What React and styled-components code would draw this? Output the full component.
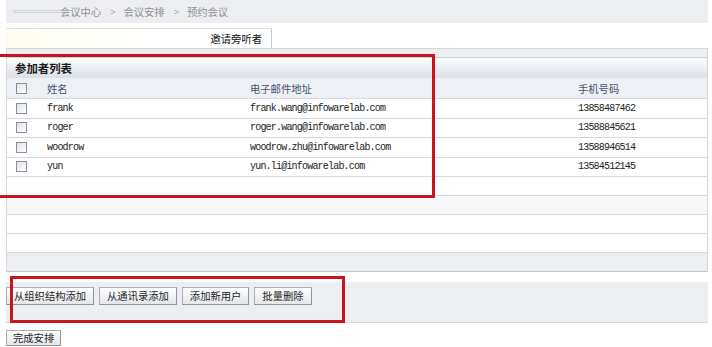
import React from 'react';
import styled, { createGlobalStyle } from 'styled-components';

const Global = createGlobalStyle`
  html, body { margin: 0; padding: 0; background: #fff; }
  body { font-family: "Noto Sans CJK SC", "Noto Sans", sans-serif; overflow: hidden; }
`;

const Page = styled.div`
  position: relative;
  width: 702px;
  height: 347px;
  margin-left: 6px;
`;

const Breadcrumb = styled.div`
  height: 23px;
  background: #edeef1;
  display: flex;
  align-items: center;
  padding-left: 7px;
  font-size: 10.3px;
  color: #8e9196;
`;

const Faded = styled.span`
  display: inline-block;
  width: 47px;
  height: 1px;
  border-top: 1px solid #d0d1d4;
  border-bottom: 1px solid #d0d1d4;
`;

const Sep = styled.span`
  font-family: "Liberation Sans", sans-serif;
  font-size: 9px;
  color: #a5a8ad;
  margin: 0 8px 0 9px;
`;

const TabStrip = styled.div`
  margin-top: 5px;
  height: 20px;
  border-bottom: 1px solid #d3d7dc;
  display: flex;
`;

const Tab = styled.div`
  width: 266px;
  height: 20px;
  border-top: 1px solid #dfe1e4;
  border-right: 1px solid #c6c9ce;
  box-sizing: border-box;
  background: linear-gradient(to right, #fffdf1, #ffffff 60%);
  display: flex;
  align-items: center;
  justify-content: flex-end;
  padding-right: 9px;
  font-size: 10.3px;
  color: #111;
`;

const Panel = styled.div`
  border-left: 1px solid #d3d6db;
  border-right: 1px solid #d3d6db;
`;

const TopBand = styled.div`
  height: 8px;
  background: #eceef2;
  border-bottom: 1px solid #cdd2d9;
`;

const TitleBar = styled.div`
  height: 20px;
  background: linear-gradient(#fbfcfd, #dce1e8);
  display: flex;
  align-items: center;
  padding-left: 8px;
  font-size: 11.4px;
  font-weight: bold;
  color: #1c1c1c;
`;

const GridRow = styled.div`
  display: grid;
  grid-template-columns: 40px 203px 328px 1fr;
  align-items: center;
  box-sizing: border-box;
  height: ${p => p.$h}px;
  border-bottom: 1px solid ${p => p.$line || '#d6d9de'};
  background: ${p => p.$bg || '#fff'};
`;

const HeadCell = styled.div`
  font-size: 10.3px;
  color: #46526a;
`;

const DataCell = styled.div`
  font-family: "Liberation Mono", monospace;
  font-size: 10px;
  letter-spacing: -0.8px;
  color: #222;
`;

const CheckCell = styled.div`
  padding-left: 9px;
  display: flex;
  align-items: center;
`;

const Check = styled.span`
  width: 9px;
  height: 9px;
  border: 1px solid #8a9098;
  background: linear-gradient(135deg, #dfe2e6, #ffffff);
`;

const Gap = styled.div`
  height: 10px;
`;

const ButtonBar = styled.div`
  height: 35px;
  padding-top: 5px;
  background: #eceef2;
  border-bottom: 1px solid #d6d9de;
  display: flex;
  align-items: flex-start;
  gap: 5px;
`;

const Button = styled.button`
  height: 18px;
  padding: 0 7px;
  margin: 0;
  border: 1px solid #a9adb4;
  border-right-color: #8f949b;
  border-bottom-color: #8f949b;
  background: linear-gradient(#ffffff, #e3e6ea);
  font-family: "Noto Sans CJK SC", sans-serif;
  font-size: 10.3px;
  line-height: 16px;
  color: #1e1e1e;
  border-radius: 0;
`;

const DoneButton = styled(Button)`
  margin-top: 6px;
  height: 16px;
  line-height: 14px;
  padding: 0 6px;
`;

const Mark = styled.div`
  position: absolute;
  left: ${p => p.$l}px;
  top: ${p => p.$t}px;
  width: ${p => p.$w}px;
  height: ${p => p.$h}px;
  box-sizing: border-box;
  border: 3px solid #c8151d;
  pointer-events: none;
`;

const people = [
  { name: 'frank', email: 'frank.wang@infowarelab.com', phone: '13858487462' },
  { name: 'roger', email: 'roger.wang@infowarelab.com', phone: '13588845621' },
  { name: 'woodrow', email: 'woodrow.zhu@infowarelab.com', phone: '13588946514' },
  { name: 'yun', email: 'yun.li@infowarelab.com', phone: '13584512145' },
];

const empties = ['#fff', '#f7f8fa', '#fff', '#fff'];

export default function App() {
  return (
    <>
      <Global />
      <Page>
        <Breadcrumb>
          <Faded />
          <span>会议中心</span>
          <Sep>&gt;</Sep>
          <span>会议安排</span>
          <Sep>&gt;</Sep>
          <span>预约会议</span>
        </Breadcrumb>
        <TabStrip>
          <Tab>邀请旁听者</Tab>
        </TabStrip>
        <Panel>
          <TopBand />
          <TitleBar>参加者列表</TitleBar>
          <GridRow $h={21} $bg="#edf0f4">
            <CheckCell><Check /></CheckCell>
            <HeadCell>姓名</HeadCell>
            <HeadCell>电子邮件地址</HeadCell>
            <HeadCell>手机号码</HeadCell>
          </GridRow>
          {people.map(p => (
            <GridRow key={p.name} $h={19.5}>
              <CheckCell><Check /></CheckCell>
              <DataCell>{p.name}</DataCell>
              <DataCell>{p.email}</DataCell>
              <DataCell>{p.phone}</DataCell>
            </GridRow>
          ))}
          {empties.map((bg, i) => (
            <GridRow key={i} $h={19} $bg={bg} />
          ))}
          <GridRow $h={19} $bg="#eceef2" $line="#c2c6cc" />
        </Panel>
        <Gap />
        <ButtonBar>
          <Button>从组织结构添加</Button>
          <Button>从通讯录添加</Button>
          <Button>添加新用户</Button>
          <Button>批量删除</Button>
        </ButtonBar>
        <DoneButton>完成安排</DoneButton>
        <Mark $l={-16} $t={54} $w={445} $h={144} />
        <Mark $l={4} $t={276} $w={335} $h={47} />
      </Page>
    </>
  );
}
